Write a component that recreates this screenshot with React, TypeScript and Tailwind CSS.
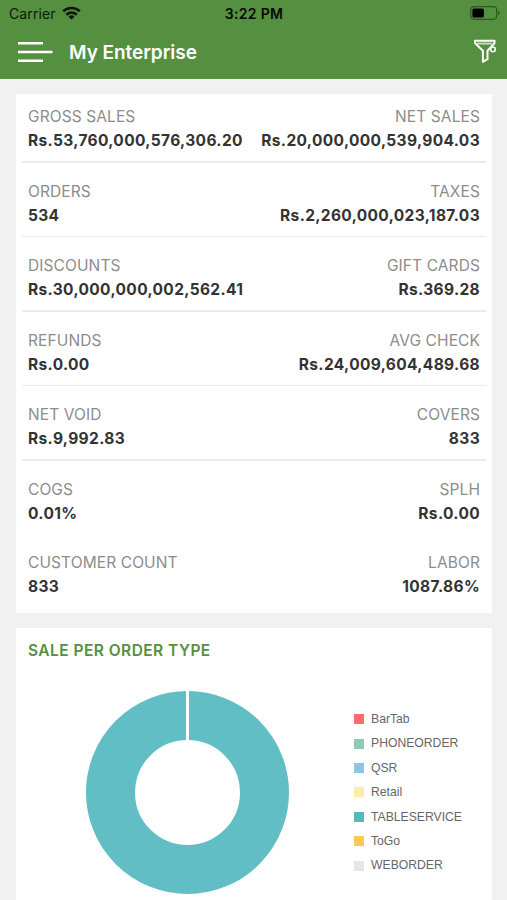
type Metric = { label: string; value: string }

const metrics: [Metric, Metric][] = [
  [
    { label: "GROSS SALES", value: "Rs.53,760,000,576,306.20" },
    { label: "NET SALES", value: "Rs.20,000,000,539,904.03" },
  ],
  [
    { label: "ORDERS", value: "534" },
    { label: "TAXES", value: "Rs.2,260,000,023,187.03" },
  ],
  [
    { label: "DISCOUNTS", value: "Rs.30,000,000,002,562.41" },
    { label: "GIFT CARDS", value: "Rs.369.28" },
  ],
  [
    { label: "REFUNDS", value: "Rs.0.00" },
    { label: "AVG CHECK", value: "Rs.24,009,604,489.68" },
  ],
  [
    { label: "NET VOID", value: "Rs.9,992.83" },
    { label: "COVERS", value: "833" },
  ],
  [
    { label: "COGS", value: "0.01%" },
    { label: "SPLH", value: "Rs.0.00" },
  ],
  [
    { label: "CUSTOMER COUNT", value: "833" },
    { label: "LABOR", value: "1087.86%" },
  ],
]

const legend = [
  { name: "BarTab", color: "bg-[#ff6b6b]" },
  { name: "PHONEORDER", color: "bg-[#8fcbb3]" },
  { name: "QSR", color: "bg-[#8bc6e8]" },
  { name: "Retail", color: "bg-[#ffeca4]" },
  { name: "TABLESERVICE", color: "bg-[#55b9be]" },
  { name: "ToGo", color: "bg-[#fdc855]" },
  { name: "WEBORDER", color: "bg-[#e6e6e6]" },
]

function StatusBar() {
  return (
    <div className="grid h-[27px] grid-cols-3 items-center pr-[7px] pl-[9px] text-[14px] text-[#0d1a08]">
      <div className="flex items-center gap-[6px]">
        <span className="tracking-[0.1px]">Carrier</span>
        <svg className="-mt-[2px]" width="19" height="14" viewBox="0 0 19 14" fill="none" stroke="currentColor" strokeWidth="2.6">
          <path d="M1.2 5.3a12 12 0 0 1 16.6 0" />
          <path d="M4.3 8.7a7.5 7.5 0 0 1 10.4 0" />
          <path d="M9.5 13.6 6.5 10.7a4.3 4.3 0 0 1 6 0z" fill="currentColor" stroke="none" />
        </svg>
      </div>
      <span className="pr-px text-center font-semibold tracking-[0.3px] text-[#040a02]">3:22 PM</span>
      <svg className="-mt-px justify-self-end" width="30" height="14" viewBox="0 0 30 14" fill="none">
        <rect x="0.7" y="0.7" width="26" height="12.6" rx="3.5" stroke="#315822" strokeWidth="1.2" />
        <rect x="2.4" y="2.5" width="11.5" height="9" rx="1.6" fill="#000" />
        <path d="M28 4.7c2 .6 2 4 0 4.6z" fill="#315822" />
      </svg>
    </div>
  )
}

function Header() {
  return (
    <header className="h-[79px] bg-[#558f40]">
      <StatusBar />
      <div className="flex h-[50px] items-center pr-[9px] pl-[18px] text-white">
        <svg width="35" height="22" viewBox="0 0 35 22" stroke="currentColor" strokeWidth="2.6">
          <path d="M0 2.3h25M0 11h34.5M0 19.7h25" />
        </svg>
        <h1 className="ml-4 grow pt-[3px] text-[19px] font-semibold tracking-[-0.05px]">My Enterprise</h1>
        <svg className="-mt-px mr-px" width="25" height="25" viewBox="0 0 25 25" fill="none" stroke="currentColor" strokeWidth="2" strokeLinejoin="round">
          <path d="M3 1.8h19.5v2.3l-7 7.6v8.5l-4.6 2.6V11.7l-7.9-7.6z" />
          <path d="M5 4.6h15" opacity="0.65" />
          <circle cx="21" cy="10.4" r="2.3" strokeWidth="1.5" />
        </svg>
      </div>
    </header>
  )
}

function MetricCell({ label, value }: Metric) {
  return (
    <div>
      <div className="h-6 text-[15.5px] leading-[22px] tracking-[0.1px] text-[#8c8c8c]">{label}</div>
      <div className="h-[23px] text-[15.5px] leading-[22px] font-bold tracking-[0.35px] text-[#333]">{value}</div>
    </div>
  )
}

function MetricsCard() {
  return (
    <section className="h-[519px] bg-white px-[6px] pt-3">
      {metrics.map(([left, right], i) => (
        <div key={left.label}>
          <div className="flex justify-between px-[6px] whitespace-nowrap">
            <MetricCell {...left} />
            <div className="text-right">
              <MetricCell {...right} />
            </div>
          </div>
          {i < 5 && <div className="mt-2 mb-[18px] h-[1.5px] bg-[#ebebeb]" />}
          {i === 5 && <div className="h-[26.5px]" />}
        </div>
      ))}
    </section>
  )
}

function OrderTypeCard() {
  return (
    <section className="h-[300px] bg-white px-3 pt-3">
      <h2 className="text-[15.5px] leading-[22px] font-semibold tracking-[0.45px] text-[#558f40]">SALE PER ORDER TYPE</h2>
      <div className="flex pt-7 pl-[57px]">
        <svg className="shrink-0" width="205" height="205" viewBox="0 0 205 205">
          <circle cx="102.5" cy="102.5" r="77" fill="none" stroke="#60bec4" strokeWidth="49" />
          <path d="M102.5 0v52" stroke="#fff" strokeWidth="3" />
        </svg>
        <ul className="mt-[17px] ml-[64px] font-['Liberation_Sans',sans-serif]">
          {legend.map((item) => (
            <li key={item.name} className="flex h-[24.4px] items-center gap-[7px] text-[12.2px] text-[#666]">
              <span className={`size-[10px] ${item.color}`} />
              {item.name}
            </li>
          ))}
        </ul>
      </div>
    </section>
  )
}

export default function App() {
  return (
    <div className="h-[900px] w-[507px] overflow-hidden bg-[#f1f1f1] font-[Inter,sans-serif]">
      <Header />
      <main className="flex flex-col gap-[15px] pt-[15px] pr-[15px] pl-4">
        <MetricsCard />
        <OrderTypeCard />
      </main>
    </div>
  )
}
